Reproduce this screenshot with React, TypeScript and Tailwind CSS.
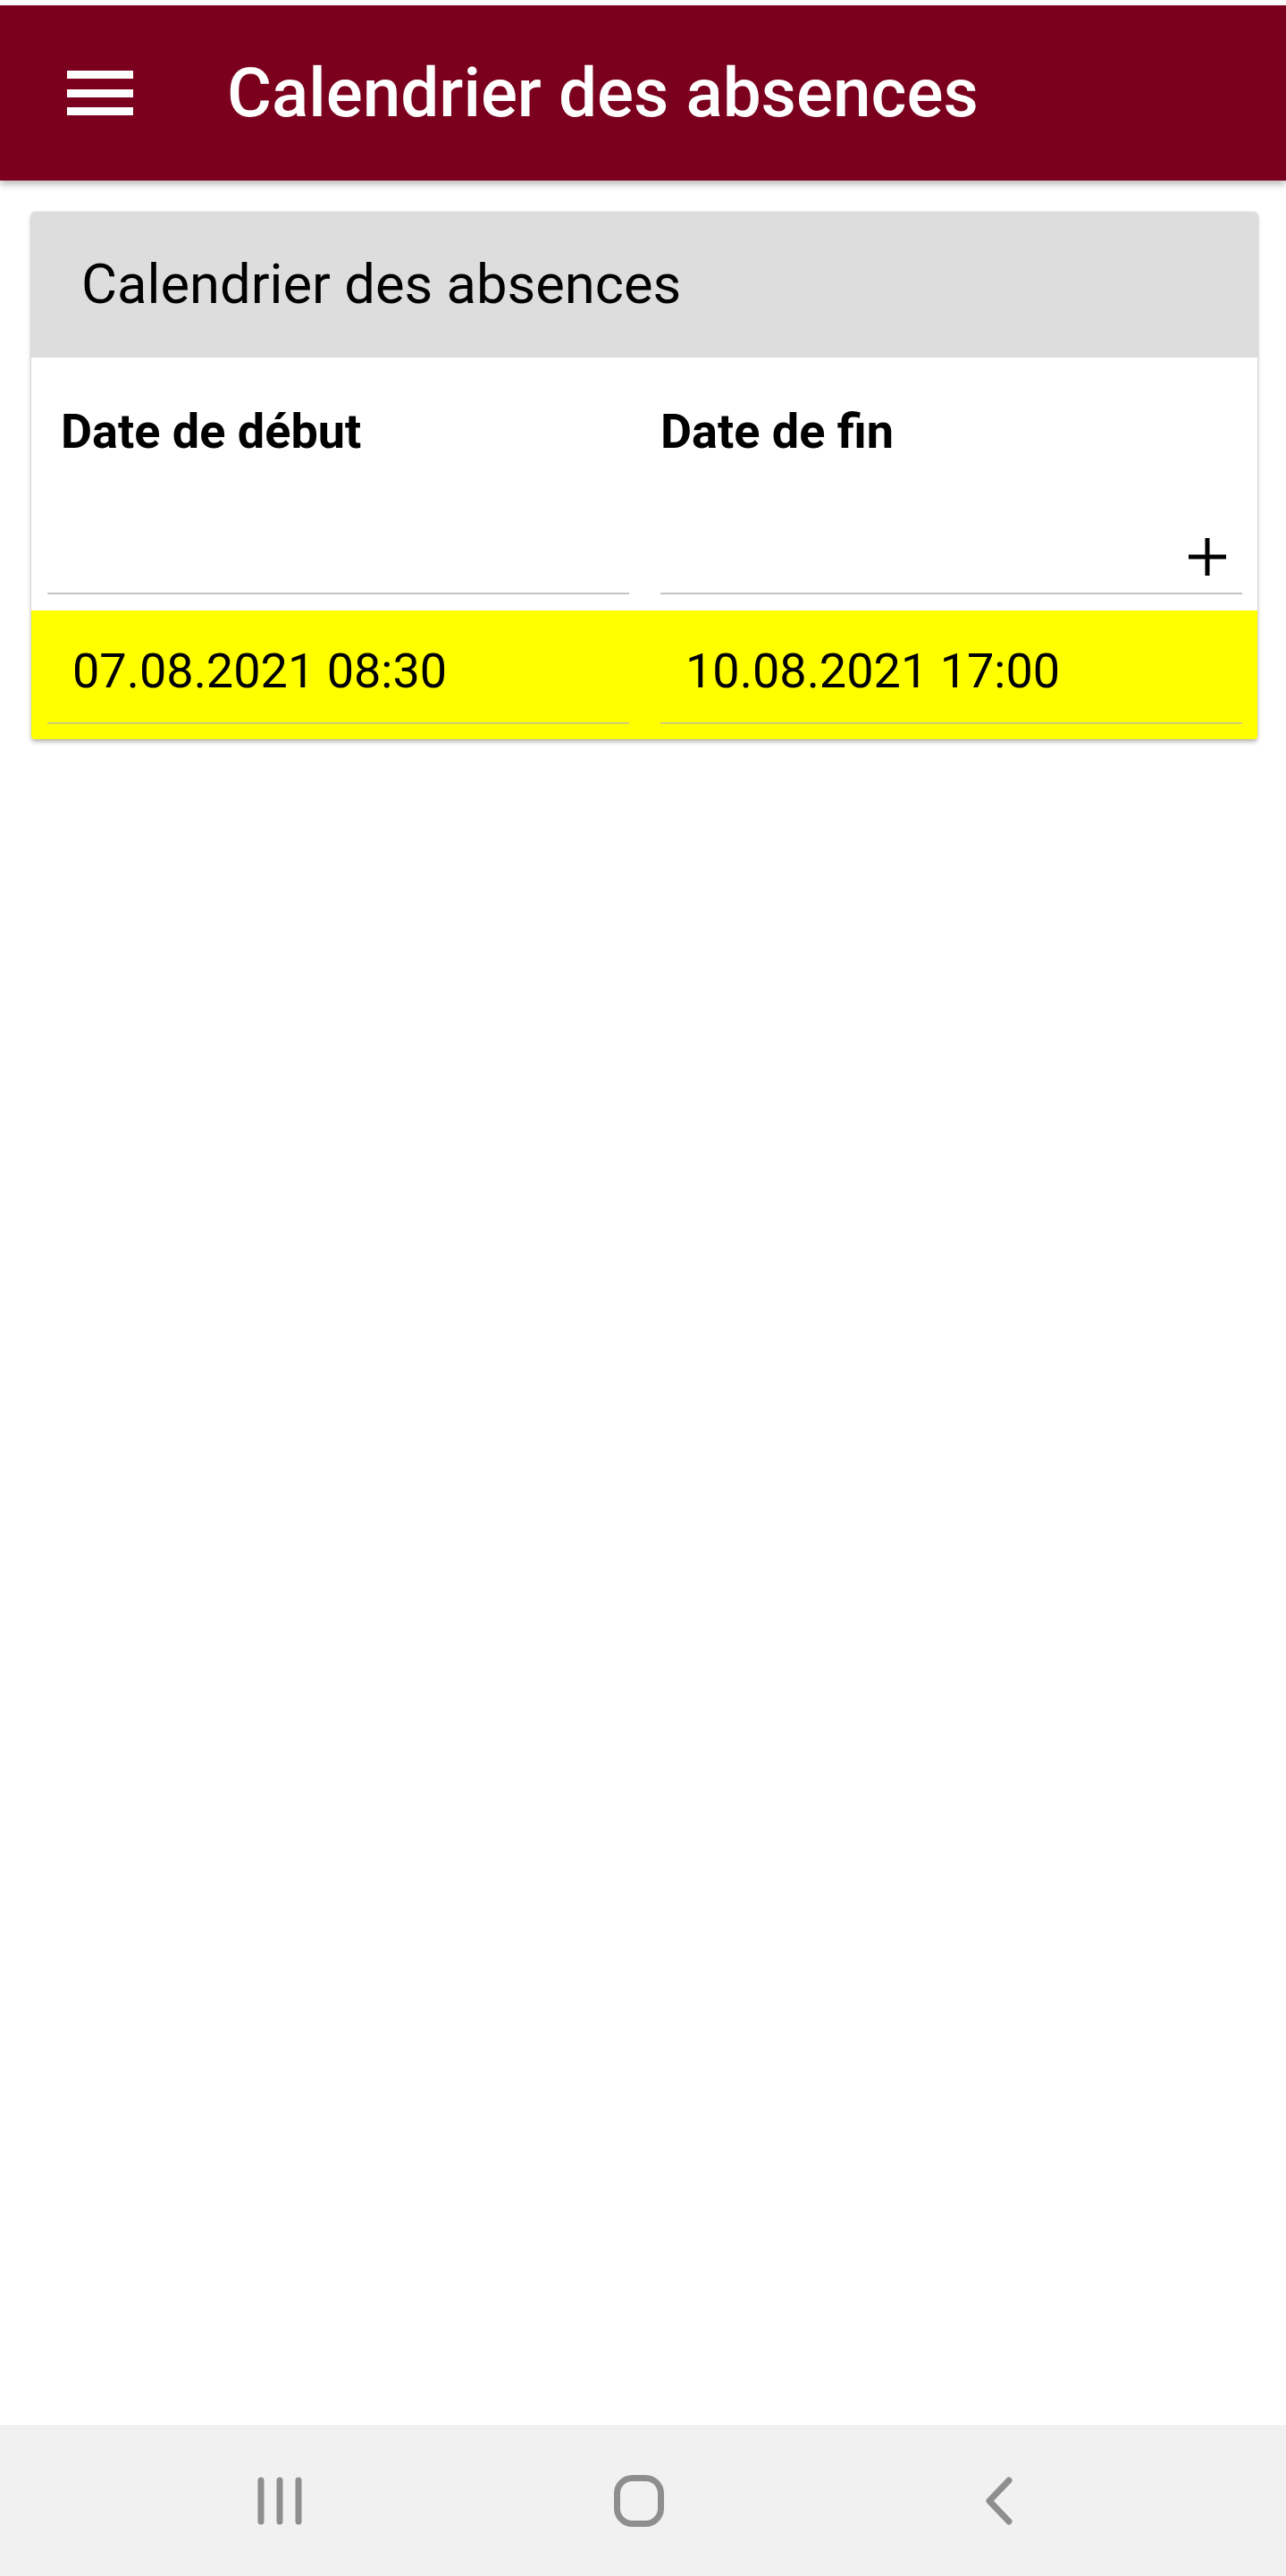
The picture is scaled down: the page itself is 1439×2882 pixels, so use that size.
import React from 'react';

/**
 * AbsenceCalendar - mobile screen listing absence periods
 */

const MenuIcon: React.FC = () => (
  <svg width="74" height="50" viewBox="0 0 74 50" aria-hidden="true">
    <rect x="0" y="0" width="74" height="9" fill="#fff" />
    <rect x="0" y="21" width="74" height="9" fill="#fff" />
    <rect x="0" y="41" width="74" height="9" fill="#fff" />
  </svg>
);

const PlusIcon: React.FC = () => (
  <svg width="42" height="42" viewBox="0 0 42 42" aria-hidden="true">
    <path d="M21 0v42M0 21h42" stroke="#000" strokeWidth={5} />
  </svg>
);

const RecentIcon: React.FC = () => (
  <svg width="50" height="54" viewBox="0 0 50 54" aria-hidden="true">
    <g stroke="#8e8e8e" strokeWidth={7} strokeLinecap="round">
      <path d="M4 4v46M25 4v46M46 4v46" />
    </g>
  </svg>
);

const HomeIcon: React.FC = () => (
  <svg width="56" height="58" viewBox="0 0 56 58" aria-hidden="true">
    <rect x="3.5" y="3.5" width="49" height="51" rx="17" fill="none" stroke="#8e8e8e" strokeWidth={7} />
  </svg>
);

const BackIcon: React.FC = () => (
  <svg width="32" height="54" viewBox="0 0 32 54" aria-hidden="true">
    <path d="M27 4L5 27l22 23" fill="none" stroke="#8e8e8e" strokeWidth={7} strokeLinecap="round" strokeLinejoin="round" />
  </svg>
);

const absences = [
  { start: '07.08.2021 08:30', end: '10.08.2021 17:00' },
];

export default function App() {
  return (
    <div className="min-h-[2882px] w-[1439px] flex flex-col bg-white pt-[6px] font-['Roboto',sans-serif] text-black">
      {/* App bar */}
      <header className="relative z-10 h-[196px] bg-[#7b001e] flex items-center shadow-[0_4px_8px_rgba(0,0,0,0.28)]">
        <div className="ml-[75px]">
          <MenuIcon />
        </div>
        <h1 className="ml-[105px] text-[76.5px] leading-none font-medium text-white">
          Calendrier des absences
        </h1>
      </header>

      <main className="flex-1">
        {/* Card */}
        <section className="mt-[35px] ml-[35px] w-[1372px] rounded-[4px] bg-white shadow-[0_3px_5px_rgba(0,0,0,0.28),0_0_2px_rgba(0,0,0,0.15)]">
          <div className="h-[163px] bg-[#dddddd] rounded-t-[4px] flex items-center pl-[56px]">
            <h2 className="text-[61.5px] leading-none font-normal">Calendrier des absences</h2>
          </div>

          {/* Column headers + filter row */}
          <div className="grid grid-cols-2 gap-x-[35px] pl-[18px] pr-[17px] pt-[53px] pb-[18px]">
            <div className="pl-[15px] text-[54px] leading-[60px] font-bold">Date de début</div>
            <div className="text-[54px] leading-[60px] font-bold">Date de fin</div>
            <div className="h-[152px] border-b-2 border-[#c4c4c4]" />
            <div className="h-[152px] border-b-2 border-[#c4c4c4] flex items-end justify-end pr-[18px] pb-[19px]">
              <PlusIcon />
            </div>
          </div>

          {/* Rows */}
          {absences.map((row, i) => (
            <div
              key={i}
              className="grid grid-cols-2 gap-x-[35px] pl-[18px] pr-[17px] pb-[17px] bg-[#ffff00] rounded-b-[4px]"
            >
              <div className="pt-[38px] pb-[27px] pl-[28px] border-b-2 border-[#d2cb7c] text-[54px] leading-[60px]">
                {row.start}
              </div>
              <div className="pt-[38px] pb-[27px] pl-[28px] border-b-2 border-[#d2cb7c] text-[54px] leading-[60px]">
                {row.end}
              </div>
            </div>
          ))}
        </section>
      </main>

      {/* System navigation bar */}
      <nav className="h-[169px] bg-[#f1f1f1] flex items-center">
        <div className="ml-[288px]">
          <RecentIcon />
        </div>
        <div className="ml-[349px]">
          <HomeIcon />
        </div>
        <div className="ml-[359px]">
          <BackIcon />
        </div>
      </nav>
    </div>
  );
}
